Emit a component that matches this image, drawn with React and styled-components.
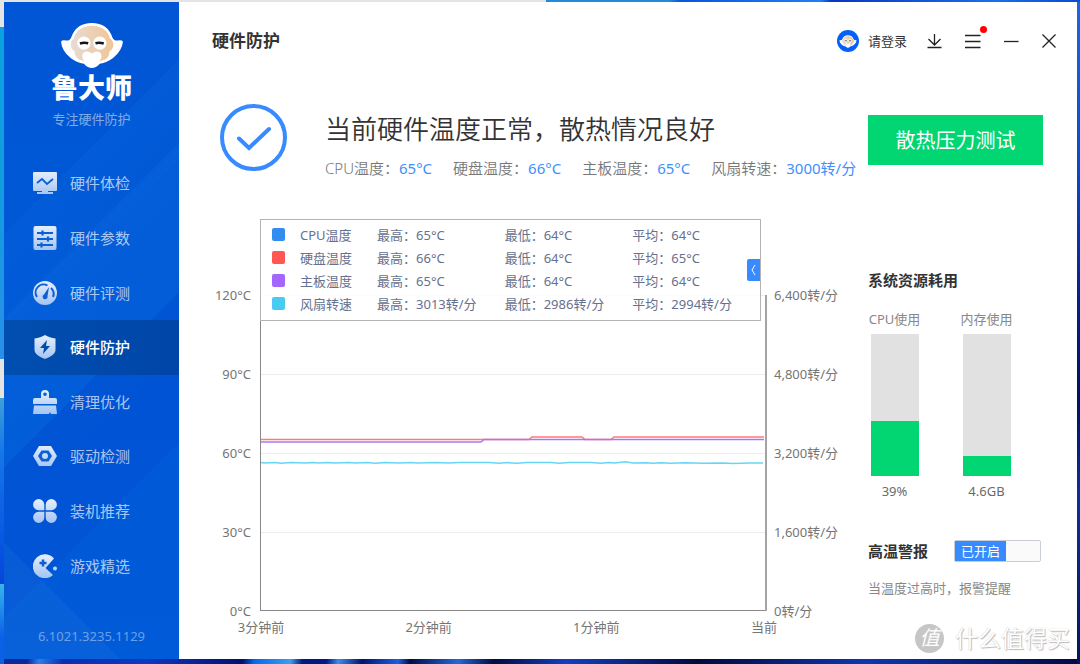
import React, {useState, useCallback, memo} from 'react';
import styled, {createGlobalStyle} from 'styled-components';

const GlobalStyle = createGlobalStyle`
    * {
        box-sizing: border-box;
    }
    body {
        margin: 0;
        font-family: "Noto Sans", "Noto Sans CJK SC", sans-serif;
        font-size: 13px;
        line-height: 20px;
        color: #333;
    }
    button {
        font: inherit;
        color: inherit;
        border: 0;
        padding: 0;
        background: none;
        cursor: pointer;
    }
    svg {
        display: block;
    }
`;

const NAV_ITEMS = [
    {id: 'check', title: '硬件体检'},
    {id: 'params', title: '硬件参数'},
    {id: 'rating', title: '硬件评测'},
    {id: 'guard', title: '硬件防护'},
    {id: 'clean', title: '清理优化'},
    {id: 'driver', title: '驱动检测'},
    {id: 'build', title: '装机推荐'},
    {id: 'games', title: '游戏精选'}
];

const METRICS = [
    {label: 'CPU温度：', value: '65°C'},
    {label: '硬盘温度：', value: '66°C'},
    {label: '主板温度：', value: '65°C'},
    {label: '风扇转速：', value: '3000转/分'}
];

const SERIES = [
    {name: 'CPU温度', color: '#338df0', max: '65°C', min: '64°C', avg: '64°C'},
    {name: '硬盘温度', color: '#ff5753', max: '66°C', min: '64°C', avg: '65°C'},
    {name: '主板温度', color: '#a366ff', max: '65°C', min: '64°C', avg: '64°C'},
    {name: '风扇转速', color: '#49cbf0', max: '3013转/分', min: '2986转/分', avg: '2994转/分'}
];

const TEMPERATURE_TICKS = ['120°C', '90°C', '60°C', '30°C', '0°C'];
const SPEED_TICKS = ['6,400转/分', '4,800转/分', '3,200转/分', '1,600转/分', '0转/分'];
const TIME_TICKS = ['3分钟前', '2分钟前', '1分钟前', '当前'];

const RESOURCES = [
    {label: 'CPU使用', value: '39%', percent: 39},
    {label: '内存使用', value: '4.6GB', percent: 14}
];

/* ---------- shell ---------- */

const Desktop = styled.div`
    display: flex;
    min-height: 100vh;
    padding: 2px 3px 5px 4px;
    background:
        linear-gradient(90deg, #e4e4e4 50.6%, #2389dc 50.6%, #2389dc 62%, #0a55dc 63%, #1f7ff5 76%, #0a35c0 77%, #1a6fea 92%, #0b4bd0) 0 0 / 100% 2px no-repeat,
        linear-gradient(#e4e4e4 4%, #0aa2e2 4%, #139be0 32%, #2a8fe8 54%, #e6e4df 54%, #e6e4df 60%, #3fa0d8 60%, #1677e8 68%, #0650e0 84%, #0644d8 88%, #38b4ec 88%, #0a60e6 96%) 0 0 / 4px 100% no-repeat,
        linear-gradient(#1a66e8, #0a49cf 25%, #04218a 45%, #020f66 60%, #0a2f9c 75%, #04155c) 100% 0 / 3px 100% no-repeat,
        linear-gradient(100deg, #0a2a9a 12%, #2a7fe8 13%, #0a2fb0 15%, #1037c0 22%, #020f6e 30%, #0769ea 31%, #3a9df0 34%, #021a78 35%, #03178a 37%, #3a8ce8 38%, #02146c 40%, #1c5fe0 43%, #020a48 44%, #2468d8 48%, #020a40 51%, #123fc0 57%, #02093c 68%, #0d36b0 82%, #020a44) #020a44;
`;

const AppWindow = styled.div`
    flex: 1;
    display: flex;
    background: #fff;
`;

/* ---------- sidebar ---------- */

const SidebarWrapper = styled.aside`
    flex: 0 0 175px;
    display: flex;
    flex-direction: column;
    background:
        linear-gradient(45deg, rgba(40, 120, 225, .2) 14%, transparent 14%),
        linear-gradient(135deg, transparent 56%, rgba(0, 70, 205, .25) 56%, rgba(0, 70, 205, .3) 74%, transparent 74%),
        linear-gradient(135deg, transparent 38%, rgba(12, 108, 224, .3) 38%, rgba(12, 108, 224, .2) 56%, transparent 56%),
        linear-gradient(135deg, transparent 28%, rgba(8, 104, 224, .25) 28%, rgba(8, 104, 224, .1) 40%, transparent 40%),
        linear-gradient(#0056d4, #005bd9);
`;

const Brand = styled.div`
    display: flex;
    flex-direction: column;
    align-items: center;
    height: 154px;
    padding-top: 20px;
`;

const BrandName = styled.div`
    font-size: 27px;
    line-height: 38px;
    font-weight: 900;
    color: #fff;
`;

const Tagline = styled.div`
    margin-top: 2px;
    color: rgba(255, 255, 255, .5);
`;

const Nav = styled.nav`
    flex: 1;
    display: flex;
    flex-direction: column;
`;

const NavButton = styled.button`
    flex: 1;
    display: flex;
    align-items: center;
    gap: 13px;
    min-height: 40px;
    padding-left: 29px;
    font-size: 15px;
    color: ${({$active}) => $active ? '#fff' : 'rgba(255, 255, 255, .68)'};
    background: ${({$active}) => $active ? 'linear-gradient(90deg, #004fb0, #0045a8)' : 'none'};
    font-weight: ${({$active}) => $active ? 500 : 400};
`;

const Version = styled.div`
    height: 66px;
    padding-top: 33px;
    text-align: center;
    color: rgba(255, 255, 255, .42);
`;

const Mascot = ({width, height, id}) =>
    <svg {...{width, height, viewBox: '12 9 193 142', 'aria-hidden': true}}>
        <defs>
            <linearGradient id={id}>
                <stop offset="0" stopColor="#e6dcd4"/>
                <stop offset="1" stopColor="#f0c596"/>
            </linearGradient>
        </defs>
        <path fill="#fff" d="M15 69q2-6 15-4 12 1 16-10 15-43 62-43t62 43q4 11 16 10 14-2 16 4-3 28-30 49-18 14-40 17-12 13-24 13t-24-13q-22-3-40-17Q17 97 15 69z"/>
        <path fill={`url(#${id})`} d="M44 78q0-12 9-19 10-38 55-39 45 1 55 39 10 7 10 19-1 16-12 19 1 16-13 25l-28 9H98l-29-9q-14-9-13-25-11-3-12-19z"/>
        <path fill="#fff" d="M79 113q0-14 12-15 9-1 17 6 9-7 17-6 12 1 12 15 0 16-29 30-29-14-29-30z"/>
        <circle cx="84" cy="73" r="20" fill="#fff"/>
        <circle cx="132" cy="73" r="20" fill="#fff"/>
        <path d="M72 74q12-4 25-1M119 73q12-3 25 1" fill="none" stroke="#161616" strokeWidth="8"/>
    </svg>;

const NAV_SHAPES = {
    check: <>
        <path d="M1 1h22a1 1 0 0 1 1 1v17a1 1 0 0 1-1 1H1a1 1 0 0 1-1-1V2a1 1 0 0 1 1-1zM9 20h6v1h5v2H4v-2h5z"/>
        <path d="M4 12l5-4 5 5 6-5" fill="none" stroke="#0d5fd6" strokeWidth="1.8"/>
    </>,
    params: <>
        <rect x="0.500" y="0" width="23" height="24" rx="2"/>
        <path d="M4 7h16M4 13h16M4 19h16M9.500 4.500v5M15 10.500v5M8.500 16.500v5" fill="none" stroke="#0d5fd6" strokeWidth="2.200"/>
    </>,
    rating: <>
        <circle cx="12" cy="12" r="12"/>
        <path d="M4 16a8 8 0 0 1 10.500-11.500M18 7a8 8 0 0 1 2 9" fill="none" stroke="#0d5fd6" strokeWidth="2"/>
        <path d="M16 6l-1.500 9a2.500 2.500 0 1 1-3.500-1.500z" fill="#0d5fd6"/>
    </>,
    guard: <>
        <path d="M12 0c3 2 6.500 3 10.500 3.500V15c0 4.500-6 7-10.500 9-4.500-2-10.500-4.500-10.500-9V3.500C5.500 3 9 2 12 0z"/>
        <path d="M14 5l-7 8h4l-1 6 7-8h-4z" fill="#004bac"/>
    </>,
    clean: <>
        <path fillRule="evenodd" d="M8 8V4q0-4 4-4t4 4v4h6q2 0 2 2v4H0v-4q0-2 2-2zM12 2.500a1.800 1.800 0 1 0 0 3.600 1.800 1.800 0 0 0 0-3.600z"/>
        <path d="M1 15.500h22l1 8.500h-6l-1-2-1 2H0z"/>
    </>,
    driver: <>
        <path d="M6 2h12l6 10-6 10H6L0 12z"/>
        <path d="M8.500 6.500h7L19 12l-3.500 5.500h-7L5 12z" fill="#0d5fd6"/>
        <circle cx="12" cy="12" r="3"/>
    </>,
    build: <>
        <path d="M11.300 11.300H5.600A5.600 5.600 0 1 1 11.300 5.600zM12.700 11.300V5.600a5.600 5.600 0 1 1 5.700 5.700zM11.300 12.700v5.700a5.600 5.600 0 1 1-5.700-5.700zM12.700 12.700h5.700a5.600 5.600 0 1 1-5.700 5.700z"/>
    </>,
    games: <>
        <path d="M21 4.500a12 12 0 1 0-1 16.500L12.500 14z"/>
        <path d="M10 5.500v7M6.500 9h7" fill="none" stroke="#0d5fd6" strokeWidth="2.500"/>
        <circle cx="22" cy="14.500" r="2"/>
    </>
};

const NavIcon = ({name}) =>
    <svg width="24" height="24" viewBox="0 0 24 24" fill={`url(#nav-${name})`} aria-hidden="true">
        <defs>
            <linearGradient id={`nav-${name}`} gradientUnits="userSpaceOnUse" x1="0" y1="0" x2="0" y2="24">
                <stop offset="0" stopColor="#e6f0fd"/>
                <stop offset="1" stopColor="#a4c4f2"/>
            </linearGradient>
        </defs>
        {NAV_SHAPES[name]}
    </svg>;

const NavItem = memo(({id, title, active, setActive}) => {
    const onClick = useCallback(() => setActive(id), [setActive, id]);

    return <NavButton {...{type: 'button', $active: active, onClick}}>
        <NavIcon name={id}/>
        {title}
    </NavButton>;
});

const Sidebar = () => {
    const [active, setActive] = useState('guard');

    return <SidebarWrapper>
        <Brand>
            <Mascot width={64} height={47} id="mascot-brand"/>
            <BrandName>鲁大师</BrandName>
            <Tagline>专注硬件防护</Tagline>
        </Brand>
        <Nav>
            {NAV_ITEMS.map(({id, title}) =>
                <NavItem {...{key: id, id, title, setActive, active: active === id}}/>
            )}
        </Nav>
        <Version>6.1021.3235.1129</Version>
    </SidebarWrapper>;
};

/* ---------- header ---------- */

const HeaderWrapper = styled.header`
    display: flex;
    align-items: center;
    justify-content: space-between;
    height: 78px;
    padding: 0 9px 0 33px;
`;

const Title = styled.h1`
    margin: 0;
    font-size: 17px;
    font-weight: 700;
`;

const HeaderActions = styled.div`
    display: flex;
    align-items: center;
`;

const LoginButton = styled.button`
    display: flex;
    align-items: center;
    gap: 9px;
    margin-right: 9px;
`;

const Avatar = styled.span`
    display: flex;
    align-items: center;
    justify-content: center;
    width: 22px;
    height: 22px;
    border-radius: 50%;
    background: #0560fa;
`;

const IconButton = styled.button`
    position: relative;
    display: flex;
    align-items: center;
    justify-content: center;
    width: 38px;
    height: 30px;
`;

const Dot = styled.span`
    position: absolute;
    top: 0;
    right: 5px;
    width: 7px;
    height: 7px;
    border-radius: 50%;
    background: #f00;
`;

const HeaderIcon = ({d}) =>
    <svg width="16" height="16" viewBox="0 0 16 16" fill="none" stroke="#222" strokeWidth="1.3" aria-hidden="true">
        <path d={d}/>
    </svg>;

const Header = () =>
    <HeaderWrapper>
        <Title>硬件防护</Title>
        <HeaderActions>
            <LoginButton type="button">
                <Avatar><Mascot width={18} height={13} id="mascot-avatar"/></Avatar>
                请登录
            </LoginButton>
            <IconButton type="button" aria-label="下载">
                <HeaderIcon d="M7.500 1v10.500M1.500 6l6 6 6-6M.5 14.500h14"/>
            </IconButton>
            <IconButton type="button" aria-label="菜单">
                <HeaderIcon d="M0 2.500h15.500M0 8.500h15.500M0 14.500h15.500"/>
                <Dot/>
            </IconButton>
            <IconButton type="button" aria-label="最小化">
                <HeaderIcon d="M1 8.500h14.500"/>
            </IconButton>
            <IconButton type="button" aria-label="关闭">
                <HeaderIcon d="M1.500 1.500l13 13M14.500 1.500l-13 13"/>
            </IconButton>
        </HeaderActions>
    </HeaderWrapper>;

/* ---------- status ---------- */

const StatusWrapper = styled.section`
    display: flex;
    align-items: flex-start;
    gap: 38px;
    padding: 24px 0 0 41px;
`;

const StatusText = styled.div`
    padding-top: 7px;
`;

const Headline = styled.h2`
    margin: 0 0 10px;
    font-size: 26px;
    line-height: 36px;
    font-weight: 350;
    white-space: nowrap;
`;

const MetricList = styled.ul`
    display: flex;
    gap: 21px;
    margin: 0;
    padding: 0;
    list-style: none;
    font-size: 15px;
    line-height: 22px;
    font-weight: 350;
    white-space: nowrap;
    color: #777;
`;

const MetricValue = styled.span`
    font-weight: 400;
    color: #3d8fff;
`;

const Status = () =>
    <StatusWrapper>
        <svg width="67" height="67" viewBox="0 0 67 67" fill="none" stroke="#388bff" strokeWidth="4" aria-hidden="true">
            <circle cx="33.500" cy="33.500" r="31.500"/>
            <path d="M19 34.500l10 9.500L49 25" strokeLinecap="round"/>
        </svg>
        <StatusText>
            <Headline>当前硬件温度正常，散热情况良好</Headline>
            <MetricList>
                {METRICS.map(({label, value}) =>
                    <li key={label}>{label}<MetricValue>{value}</MetricValue></li>
                )}
            </MetricList>
        </StatusText>
    </StatusWrapper>;

/* ---------- chart ---------- */

const ChartWrapper = styled.section`
    flex: 1;
    display: grid;
    grid-template-columns: 81px 1fr 101px;
    grid-template-rows: minmax(391px, 1fr) auto;
    margin-top: 40px;
    padding-bottom: 23px;
    color: #757575;
`;

/* the tick column reaches half a line past the plot so that labels centre on the grid lines */
const TickColumn = styled.div`
    display: flex;
    flex-direction: column;
    justify-content: space-between;
    margin-bottom: -8px;
    padding: ${({$right}) => $right ? '68px 0 0 7px' : '68px 9px 0 0'};
    line-height: 16px;
    text-align: ${({$right}) => $right ? 'left' : 'right'};
`;

const Plot = styled.div`
    position: relative;
    border-left: 1px solid #888;
`;

const Lines = styled.svg`
    position: absolute;
    inset: 0;
    width: 100%;
    height: 100%;

    path {
        fill: none;
        vector-effect: non-scaling-stroke;
    }
`;

const TimeAxis = styled.div`
    grid-column: 2;
    display: flex;
    justify-content: space-between;
    margin: 8px -22px 1px -24px;
    line-height: 16px;
`;

const TimeTick = styled.span`
    width: 50px;
    text-align: center;
`;

const LegendBox = styled.div`
    position: absolute;
    top: 0;
    left: -1px;
    width: 501px;
    padding: 3px 0 5px;
    border: 1px solid #b4b4b4;
    background: rgba(255, 255, 255, .85);
`;

const LegendTable = styled.table`
    width: 100%;
    table-layout: fixed;
    border-collapse: collapse;
    color: #66708f;

    td, th {
        height: 23px;
        padding: 0;
        font-weight: 400;
        text-align: left;
        white-space: nowrap;
    }
`;

const SwatchCell = styled.td`
    width: 39px;
`;

const NameCell = styled.th`
    width: 77px;
`;

const Swatch = styled.span`
    display: block;
    width: 13px;
    height: 13px;
    margin-left: 11px;
    border-radius: 2px;
    background: ${({$color}) => $color};
`;

const CollapseButton = styled.button`
    position: absolute;
    top: 39px;
    right: 0;
    display: flex;
    align-items: center;
    justify-content: center;
    width: 13px;
    height: 22px;
    border-radius: 2px 0 0 2px;
    background: #388bff;
`;

const Legend = () =>
    <LegendBox>
        <LegendTable>
            <tbody>
                {SERIES.map(({name, color, max, min, avg}) =>
                    <tr key={name}>
                        <SwatchCell><Swatch $color={color}/></SwatchCell>
                        <NameCell scope="row">{name}</NameCell>
                        <td>最高：{max}</td>
                        <td>最低：{min}</td>
                        <td>平均：{avg}</td>
                    </tr>
                )}
            </tbody>
        </LegendTable>
        <CollapseButton type="button" aria-label="收起">
            <svg width="5" height="12" viewBox="0 0 5 12" fill="none" stroke="#fff" aria-hidden="true">
                <path d="M4 1L1 6l3 5"/>
            </svg>
        </CollapseButton>
    </LegendBox>;

const Chart = () =>
    <ChartWrapper>
        <TickColumn>
            {TEMPERATURE_TICKS.map(tick => <span key={tick}>{tick}</span>)}
        </TickColumn>
        <Plot>
            <Lines viewBox="0 0 506 392" preserveAspectRatio="none" aria-hidden="true">
                <path d="M0 76.500h504M0 155.500h504M0 234.500h504M0 313.500h504" stroke="#ececec"/>
                <path d="M0 220.500h268l3-2.500h50l3 2.500h26l3-2.500h150" stroke="#ff7a76" strokeWidth="1.5"/>
                <path d="M0 223h220l3-2.500h280" stroke="#a37af5" strokeWidth="1.5"/>
                <path
                    d="M0 243.500l4 .5 10-.5 6 .7 10-.7 14 .6 8-.6 6 .6 8-.6 8 .6 14-.6 6 .5 12-.5 8 .7 10-.7 14 .4 12-.4 6 .6 20-.6 12 .6 10-.6 30 .1 10 .6 8-.6 10 .6 10-.6h24l8 .6 10-.6h22l10 .6 8-.6 6 .4 10-1.200 8 1.200 14-.2 6 .5 8-.5 10 .5 14-.5 18 .5 20-.4 10 .5 16-.5h14"
                    stroke="#66d6f5"
                    strokeWidth="1.5"
                />
                <path d="M0 391.500h506" stroke="#888"/>
                <path d="M505 76v316" stroke="#a3a3a3" strokeWidth="2"/>
            </Lines>
            <Legend/>
        </Plot>
        <TickColumn $right>
            {SPEED_TICKS.map(tick => <span key={tick}>{tick}</span>)}
        </TickColumn>
        <TimeAxis>
            {TIME_TICKS.map(tick => <TimeTick key={tick}>{tick}</TimeTick>)}
        </TimeAxis>
    </ChartWrapper>;

/* ---------- right column ---------- */

const AsideWrapper = styled.aside`
    flex: 0 0 209px;
    padding: 35px 34px 0 0;
`;

const TestButton = styled.button`
    width: 100%;
    height: 50px;
    padding-top: 2px;
    font-size: 20px;
    color: #fff;
    background: #02d673;
`;

const SectionTitle = styled.h3`
    margin: 0;
    font-size: 15px;
    font-weight: 700;
`;

const Resources = styled.section`
    margin-top: 105px;
`;

const Gauges = styled.div`
    display: flex;
    gap: 39px;
    margin-top: 19px;
`;

const Gauge = styled.div`
    display: flex;
    flex-direction: column;
    align-items: center;
    width: 53px;
    white-space: nowrap;
    color: #888;
`;

const GaugeTrack = styled.div`
    display: flex;
    align-items: flex-end;
    width: 48px;
    height: 142px;
    margin: 5px 0;
    background: #e1e1e1;
`;

const GaugeFill = styled.div`
    width: 100%;
    background: #02d673;
`;

const GaugeValue = styled.span`
    color: #6a6a6a;
`;

const AlarmRow = styled.label`
    display: flex;
    align-items: center;
    gap: 26px;
    margin-top: 39px;
    cursor: pointer;
`;

const AlarmInput = styled.input`
    position: absolute;
    opacity: 0;
`;

const AlarmTrack = styled.span`
    display: flex;
    justify-content: ${({$on}) => $on ? 'flex-start' : 'flex-end'};
    width: 87px;
    height: 22px;
    border: 1px solid #c9ced4;
    border-radius: 2px;
    background: #fafafa;
`;

const AlarmState = styled.span`
    width: 51px;
    text-align: center;
    color: #fff;
    background: ${({$on}) => $on ? '#388bff' : '#aaa'};
`;

const Hint = styled.p`
    margin: 16px 0 0;
    white-space: nowrap;
    color: #888;
`;

const Aside = () => {
    const [alarm, setAlarm] = useState(true);
    const onChange = useCallback(({target}) => setAlarm(target.checked), []);

    return <AsideWrapper>
        <TestButton type="button">散热压力测试</TestButton>
        <Resources>
            <SectionTitle>系统资源耗用</SectionTitle>
            <Gauges>
                {RESOURCES.map(({label, value, percent}) =>
                    <Gauge key={label}>
                        {label}
                        <GaugeTrack><GaugeFill style={{height: `${percent}%`}}/></GaugeTrack>
                        <GaugeValue>{value}</GaugeValue>
                    </Gauge>
                )}
            </Gauges>
        </Resources>
        <AlarmRow>
            <SectionTitle as="span">高温警报</SectionTitle>
            <AlarmInput {...{type: 'checkbox', checked: alarm, onChange}}/>
            <AlarmTrack $on={alarm}>
                <AlarmState $on={alarm}>{alarm ? '已开启' : '已关闭'}</AlarmState>
            </AlarmTrack>
        </AlarmRow>
        <Hint>当温度过高时，报警提醒</Hint>
    </AsideWrapper>;
};

/* ---------- page ---------- */

const Main = styled.main`
    position: relative;
    flex: 1;
    min-width: 0;
    display: flex;
    flex-direction: column;
`;

const Columns = styled.div`
    flex: 1;
    display: flex;
`;

const Monitor = styled.div`
    flex: 1;
    min-width: 0;
    display: flex;
    flex-direction: column;
`;

const Watermark = styled.div`
    position: absolute;
    right: 7px;
    bottom: 5px;
    display: flex;
    align-items: center;
    gap: 11px;
    font-size: 23px;
    line-height: 32px;
    color: #fff;
    text-shadow: 1px 1px 1px #bbb, 0 0 1px #bbb;
    pointer-events: none;
`;

const WatermarkSeal = styled.span`
    width: 29px;
    height: 29px;
    border-radius: 50%;
    font-size: 20px;
    line-height: 28px;
    font-style: italic;
    text-align: center;
    background: #c6c6c6;
    text-shadow: none;
`;

export default () =>
    <Desktop>
        <GlobalStyle/>
        <AppWindow>
            <Sidebar/>
            <Main>
                <Header/>
                <Columns>
                    <Monitor>
                        <Status/>
                        <Chart/>
                    </Monitor>
                    <Aside/>
                </Columns>
                <Watermark>
                    <WatermarkSeal>值</WatermarkSeal>
                    什么值得买
                </Watermark>
            </Main>
        </AppWindow>
    </Desktop>;
